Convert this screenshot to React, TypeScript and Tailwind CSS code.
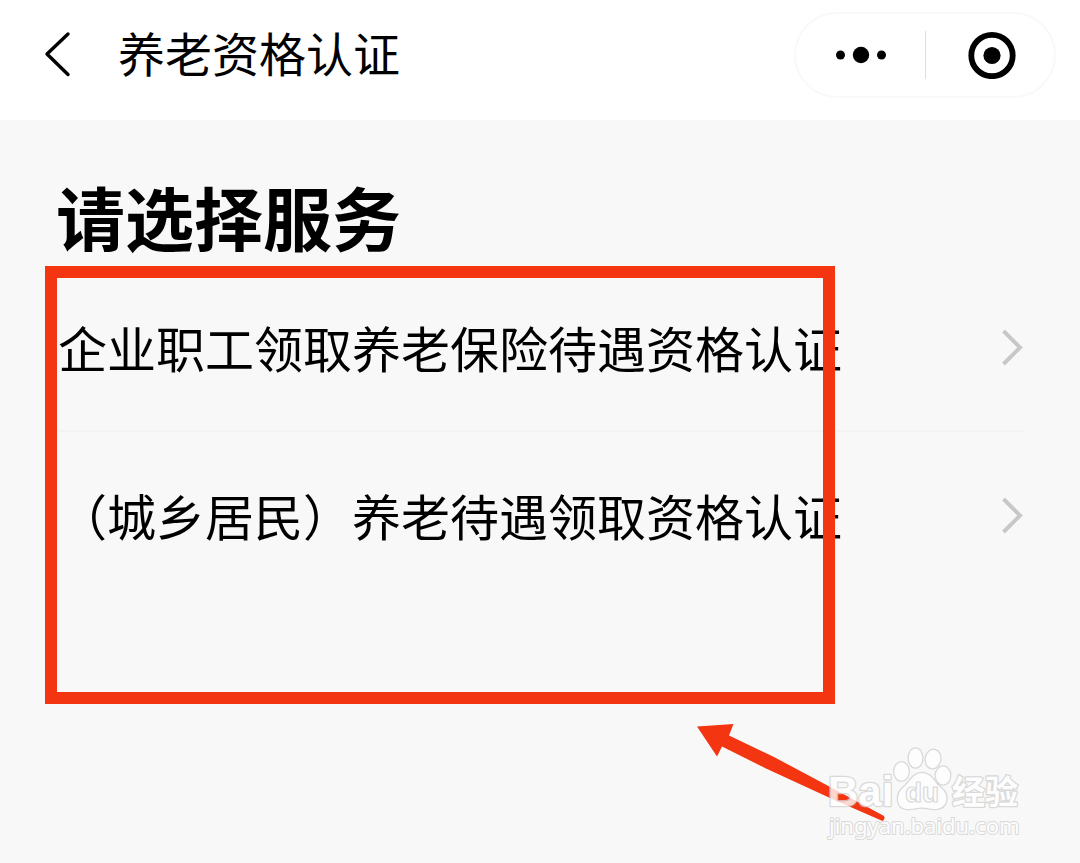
const services = [
  "企业职工领取养老保险待遇资格认证",
  "（城乡居民）养老待遇领取资格认证",
];

function Header() {
  return (
    <header className="flex h-[120px] items-start justify-between bg-white pr-6 pl-10">
      <div className="flex h-[108px] items-center gap-[38px]">
        <button type="button" aria-label="返回" className="h-12 w-10">
          <svg viewBox="0 0 40 48" className="h-12 w-10" fill="none" stroke="#000" strokeWidth="3.4" strokeLinecap="round" strokeLinejoin="round">
            <path d="M28 4 L7 24 L28 44.500" />
          </svg>
        </button>
        <h1 className="pb-1 text-[47px] leading-[60px] font-normal">养老资格认证</h1>
      </div>
      <div className="mt-3 grid h-[86px] w-[262px] grid-cols-2 items-center rounded-full border-2 border-[#f9f9f9]">
        <button type="button" aria-label="更多" className="flex h-12 items-center justify-center">
          <svg viewBox="0 0 52 18" className="h-[18px] w-[52px]">
            <circle cx="5.500" cy="9" r="4.500" />
            <circle cx="26" cy="9" r="8.200" />
            <circle cx="46.500" cy="9" r="4.500" />
          </svg>
        </button>
        <button type="button" aria-label="关闭" className="flex h-12 items-center justify-center border-l border-[#dedede] pl-1">
          <svg viewBox="0 0 48 48" className="size-12">
            <circle cx="24" cy="24.500" r="20.700" fill="none" stroke="#000" strokeWidth="5.800" />
            <circle cx="24" cy="24.500" r="8.600" />
          </svg>
        </button>
      </div>
    </header>
  );
}

function Watermark() {
  return (
    <svg
      viewBox="0 0 204 96"
      className="absolute top-[744px] left-[825px] h-24 w-[204px]"
      fill="#fff"
      stroke="#d2d2d2"
      strokeWidth="2.6"
      strokeLinejoin="round"
      opacity="0.8"
    >
      <g paintOrder="stroke">
        <text x="3" y="62" fontSize="42" fontWeight="700" fontFamily="Liberation Sans, Arial, sans-serif">Bai</text>
        <ellipse cx="76.500" cy="27.500" rx="7.200" ry="9.200" />
        <ellipse cx="90.500" cy="14" rx="6.800" ry="9.500" />
        <ellipse cx="108" cy="15" rx="7.200" ry="9.200" transform="rotate(10 108 15)" />
        <ellipse cx="118" cy="31.500" rx="7.200" ry="9" />
        <path d="M97 29 C107 29 109 39 117 45 C124 51 123 64 111 65 C105 65.500 102 63.500 97 63.500 C91 63.500 88 65.500 82 65 C71 64 71 51 77 45 C85 38 88 29 97 29 Z" />
        <text x="127" y="60" fontSize="33" fontWeight="700" fontFamily="Noto Sans CJK SC, sans-serif">经验</text>
        <text x="4" y="90" fontSize="22" strokeWidth="2" fontFamily="Noto Sans, sans-serif">jingyan.baidu.com</text>
      </g>
      <text x="80" y="58" fontSize="28" fontWeight="700" strokeWidth="1.200" fontFamily="Liberation Sans, Arial, sans-serif">du</text>
    </svg>
  );
}

export default function App() {
  return (
    <div className="relative min-h-screen overflow-x-hidden bg-[#f8f8f8] font-['Noto_Sans_CJK_SC',sans-serif] text-black">
      <Header />
      <main className="px-14">
        <h2 className="pt-14 pb-2 text-[69px] leading-[80px] font-bold">请选择服务</h2>
        <ul className="pl-0.5">
          {services.map((name) => (
            <li key={name} className="border-b-2 border-[#f3f3f3] last:border-transparent">
              <a href="#" className="flex h-[166px] items-center justify-between">
                <span className="text-[49px] leading-[60px] whitespace-nowrap">{name}</span>
                <svg viewBox="0 0 22 38" className="h-[38px] w-[22px] shrink-0" fill="none" stroke="#c8c8c8" strokeWidth="4">
                  <path d="M1.500 3 L18 19.500 L1.500 36" />
                </svg>
              </a>
            </li>
          ))}
        </ul>
      </main>
      <div className="pointer-events-none absolute top-[266px] left-[45px] h-[438px] w-[790px] border-12 border-[#f43512]" />
      <svg viewBox="0 0 190 98" className="pointer-events-none absolute top-[723px] left-[696px] h-[98px] w-[190px]" fill="#f43512">
        <path d="M1 3.500 L37.500 1 L33 12.500 L78 34 L138 66 L188 93 Q189.500 96 186.500 98 L134 75 L70 45.500 L26 23.500 L21 33.500 Z" />
      </svg>
      <Watermark />
    </div>
  );
}
